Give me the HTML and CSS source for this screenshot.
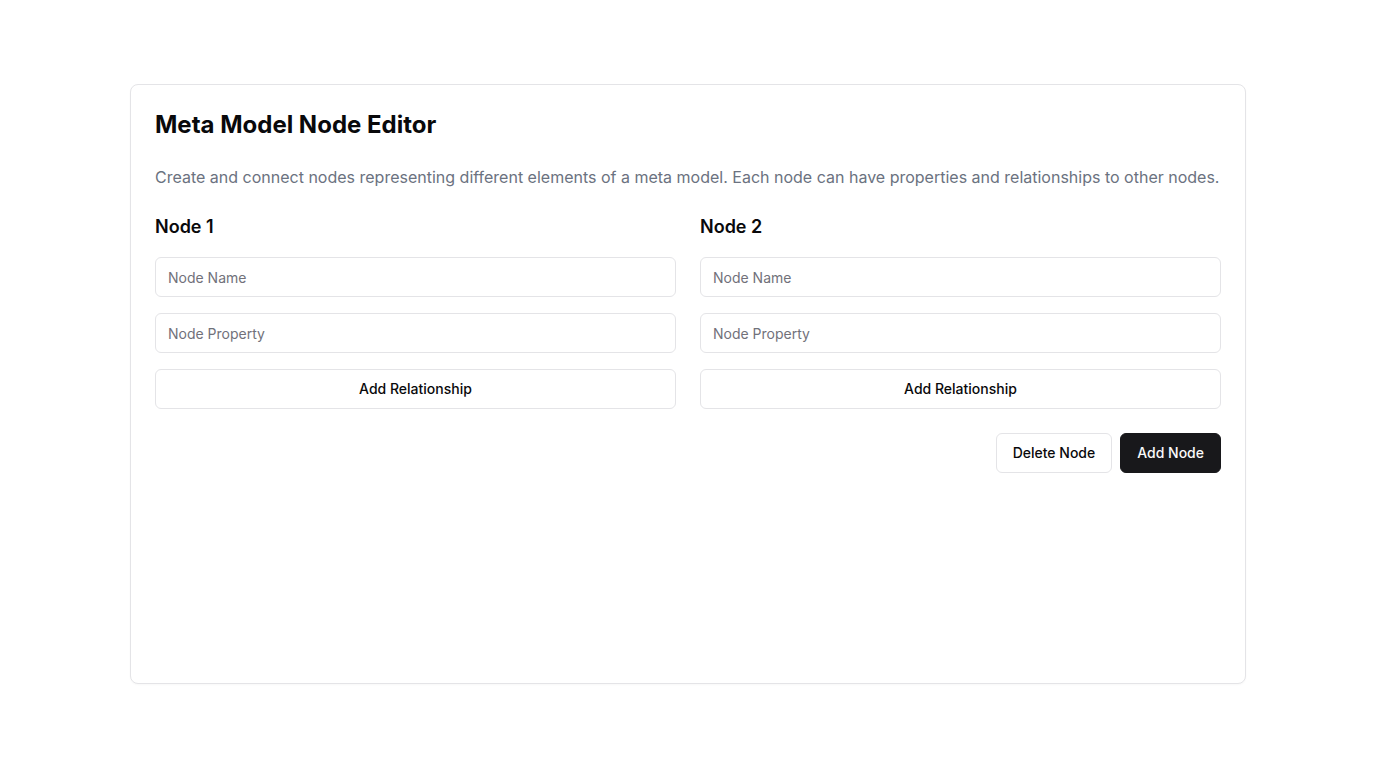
FILE: index.html
```html
<!DOCTYPE html>
<html lang="en">
<head>
<meta charset="utf-8">
<title>Meta Model Node Editor</title>
<link rel="stylesheet" href="styles.css">
</head>
<body>
<main class="page">
  <section class="card">
    <h1 class="title">Meta Model Node Editor</h1>
    <p class="desc">Create and connect nodes representing different elements of a meta model. Each node can have properties and relationships to other nodes.</p>
    <div class="grid">
      <div class="node">
        <h2 class="node-title">Node 1</h2>
        <input class="input" type="text" placeholder="Node Name">
        <input class="input" type="text" placeholder="Node Property">
        <button class="btn btn-outline">Add Relationship</button>
      </div>
      <div class="node">
        <h2 class="node-title">Node 2</h2>
        <input class="input" type="text" placeholder="Node Name">
        <input class="input" type="text" placeholder="Node Property">
        <button class="btn btn-outline">Add Relationship</button>
      </div>
    </div>
    <div class="actions">
      <button class="btn btn-outline">Delete Node</button>
      <button class="btn btn-dark">Add Node</button>
    </div>
  </section>
</main>
</body>
</html>
```
FILE: styles.css
```css
* { box-sizing: border-box; }
html, body { margin: 0; padding: 0; background: #fff; }
body {
  font-family: Inter, "Liberation Sans", sans-serif;
  color: #09090b;
}
.page {
  height: 768px;
  display: flex;
  align-items: center;
  justify-content: center;
}
.card {
  width: 1116px;
  height: 600px;
  border: 1px solid #e4e4e7;
  border-radius: 8px;
  padding: 24px;
  background: #fff;
  box-shadow: 0 1px 2px rgba(0,0,0,0.03);
}
.title {
  margin: 0;
  font-size: 24px;
  line-height: 32px;
  font-weight: 700;
}
.desc {
  margin: 24px 0 24px;
  font-size: 16px;
  line-height: 24px;
  color: #6b7280;
}
.grid {
  display: grid;
  grid-template-columns: 1fr 1fr;
  gap: 24px;
}
.node {
  display: flex;
  flex-direction: column;
  gap: 16px;
}
.node-title {
  margin: 0;
  font-size: 18px;
  line-height: 28px;
  font-weight: 600;
}
.input {
  height: 40px;
  width: 100%;
  border: 1px solid #e4e4e7;
  border-radius: 6px;
  padding: 0 12px;
  font-family: inherit;
  font-size: 14px;
  color: #09090b;
  background: #fff;
  outline: none;
}
.input::placeholder { color: #71717a; }
.btn {
  height: 40px;
  border-radius: 6px;
  font-family: inherit;
  font-size: 14px;
  font-weight: 500;
  padding: 0 16px 1px;
  cursor: pointer;
}
.btn-outline {
  border: 1px solid #e4e4e7;
  background: #fff;
  color: #09090b;
}
.btn-dark {
  border: 1px solid #18181b;
  background: #18181b;
  color: #fafafa;
}
.actions {
  display: flex;
  justify-content: flex-end;
  gap: 8px;
  margin-top: 24px;
}
```
